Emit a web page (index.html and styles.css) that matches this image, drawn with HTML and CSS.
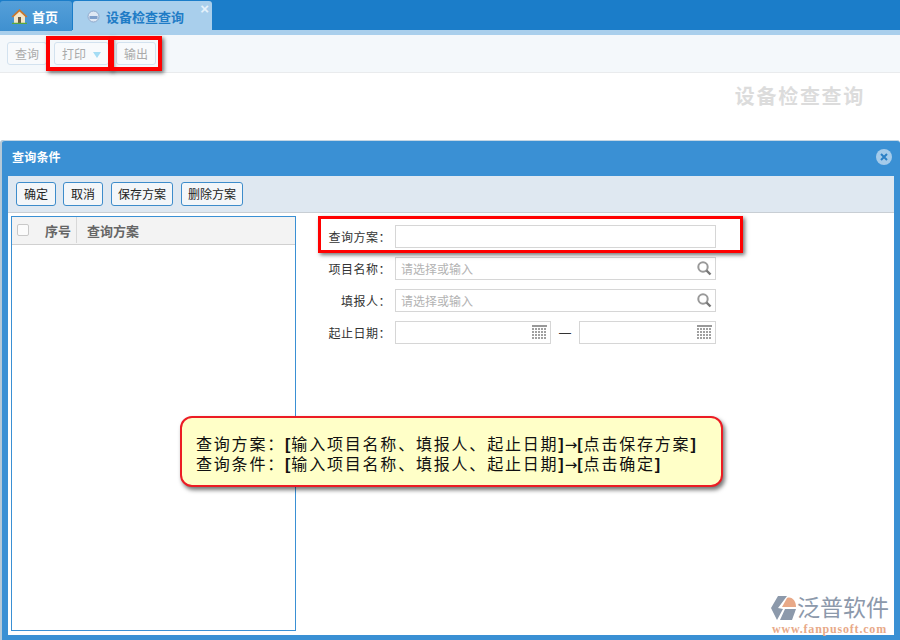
FILE: index.html
```html
<!DOCTYPE html>
<html lang="zh">
<head>
<meta charset="utf-8">
<title>设备检查查询</title>
<link rel="stylesheet" href="styles.css">
</head>
<body>
<div class="page">
  <header class="tabbar">
    <div class="tab tab-home">
      <svg class="home-icon" width="17" height="16" viewBox="0 0 17 16"><path d="M3 8v7h11V8L8.500 3z" fill="#f4e6c8"/><path d="M.5 8.500 8.500 1l8 7.500-1.500 1L8.500 3.500 2 9.500z" fill="#c9782f"/><rect x="7" y="9" width="3" height="6" fill="#6a5a44"/><path d="M1 15.500h15" stroke="#5aa83c" stroke-width="1.500"/></svg>
      <span>首页</span>
    </div>
    <div class="tab tab-active">
      <svg class="globe-icon" width="13" height="13" viewBox="0 0 13 13"><circle cx="6.500" cy="6.500" r="5.500" fill="#dfe8f4" stroke="#8fa9cc"/><rect x="2.500" y="6" width="8" height="3" fill="#7f9fcb"/></svg>
      <span class="tab-label">设备检查查询</span>
      <span class="tab-close">×</span>
    </div>
  </header>
  <nav class="toolbar">
    <button class="tool-btn">查询</button>
    <button class="tool-btn tool-print"><span>打印</span><i class="caret"></i></button>
    <button class="tool-btn">输出</button>
  </nav>
  <section class="title-area"><h1>设备检查查询</h1></section>
  <section class="dialog">
    <div class="dialog-head">
      <span>查询条件</span>
      <svg width="16" height="16" viewBox="0 0 16 16"><circle cx="8" cy="8" r="8" fill="#a5cbea"/><path d="M5 5l6 6M11 5l-6 6" stroke="#2c80c6" stroke-width="2"/></svg>
    </div>
    <div class="dialog-inner">
      <div class="actions">
        <button class="act-btn">确定</button>
        <button class="act-btn">取消</button>
        <button class="act-btn act-long">保存方案</button>
        <button class="act-btn act-long">删除方案</button>
      </div>
      <div class="content">
        <div class="plan-list">
          <div class="plan-head">
            <div class="col-check"><i class="checkbox"></i></div>
            <div class="col-no">序号</div>
            <div class="col-name">查询方案</div>
          </div>
        </div>
        <form class="form">
          <div class="row">
            <label>查询方案：</label>
            <div class="field field-wide"></div>
          </div>
          <div class="row">
            <label>项目名称：</label>
            <div class="field field-wide"><span class="ph">请选择或输入</span>
              <svg class="ico" width="15" height="15" viewBox="0 0 15 15"><circle cx="6" cy="6" r="4.700" fill="none" stroke="#999" stroke-width="2"/><path d="M9.500 9.500l4 4" stroke="#777" stroke-width="2.400"/></svg>
            </div>
          </div>
          <div class="row">
            <label>填报人：</label>
            <div class="field field-wide"><span class="ph">请选择或输入</span>
              <svg class="ico" width="15" height="15" viewBox="0 0 15 15"><circle cx="6" cy="6" r="4.700" fill="none" stroke="#999" stroke-width="2"/><path d="M9.500 9.500l4 4" stroke="#777" stroke-width="2.400"/></svg>
            </div>
          </div>
          <div class="row">
            <label>起止日期：</label>
            <div class="field field-date">
              <svg class="ico" width="15" height="14" viewBox="0 0 15 14"><rect width="15" height="2" fill="#999"/><path d="M0 4h15M0 7h15M0 10h15M0 13h15" stroke="#a0a0a0" stroke-width="2" stroke-dasharray="2 1"/></svg>
            </div>
            <span class="dash">—</span>
            <div class="field field-date field-date2">
              <svg class="ico" width="15" height="14" viewBox="0 0 15 14"><rect width="15" height="2" fill="#999"/><path d="M0 4h15M0 7h15M0 10h15M0 13h15" stroke="#a0a0a0" stroke-width="2" stroke-dasharray="2 1"/></svg>
            </div>
          </div>
        </form>
      </div>
    </div>
  </section>
  <div class="mark mark-print"></div>
  <div class="mark mark-export"></div>
  <div class="mark mark-plan"></div>
  <div class="callout">
    <p>查询方案：<b>[</b>输入项目名称、填报人、起止日期<b>]</b><em>→</em><b>[</b>点击保存方案<b>]</b></p>
    <p>查询条件：<b>[</b>输入项目名称、填报人、起止日期<b>]</b><em>→</em><b>[</b>点击确定<b>]</b></p>
  </div>
  <div class="logo">
    <div class="logo-top">
      <svg width="27" height="26" viewBox="0 0 27 26"><path d="M8 1h9L8 13l5 1-6 11L1 13z" fill="#8c99ab"/><path d="M12 12l5-9c5-2 9 3 9 9z" fill="#e8a988"/><path d="M15 14h11l-4 11H10z" fill="#8c99ab"/></svg>
      <span class="logo-name">泛普软件</span>
    </div>
    <div class="logo-url">www.fanpusoft.com</div>
  </div>
</div>
</body>
</html>
```

FILE: styles.css
```css
* { box-sizing: border-box; }
html, body { margin: 0; padding: 0; }
body { font-family: "Liberation Sans", "Noto Sans CJK SC", sans-serif; font-size: 12px; background: #fff; }
button { margin: 0; font-family: inherit; }
.page { position: relative; width: 900px; height: 640px; overflow: hidden; background: #fff; }

.tabbar { height: 35px; display: flex; align-items: flex-start; gap: 1px; padding-top: 1px; background: linear-gradient(#1b7dc9 0, #1b7dc9 30px, #a9cfec 30px); }
.tab { height: 30px; display: flex; align-items: center; font-weight: bold; font-size: 13px; border-radius: 3px 3px 0 0; }
.tab-home { width: 72px; padding-left: 11px; gap: 4px; color: #fff; background: linear-gradient(#559fd9, #3f90d0); }
.tab-active { position: relative; width: 139px; height: 34px; padding: 0 0 4px 14px; gap: 6px; color: #1f7cc6; background: #a9cfec; }
.tab-close { position: absolute; right: 3px; top: 0; color: #e6f2fb; font-size: 15px; line-height: 16px; }

.toolbar { height: 38px; display: flex; align-items: center; gap: 7px; padding: 0 0 0 7px; background: #f4f8fb; border-bottom: 1px solid #e9ebed; }
.tool-btn { display: flex; align-items: center; flex: none; height: 23px; padding: 0 7px; font-size: 12px; color: #aaa; white-space: nowrap; background: #f8fafc; border: 1px solid #d3e2ef; border-radius: 3px; }
.tool-print { width: 55px; }
.caret { flex: none; margin-left: 7px; margin-top: 2px; border: 4px solid transparent; border-top: 6px solid #a5dcf4; border-bottom: 0; }

.title-area { height: 67px; display: flex; justify-content: flex-end; padding: 12px 35px 0 0; }
.title-area h1 { margin: 0; font-size: 20px; line-height: 24px; font-weight: bold; letter-spacing: 1.700px; color: #dcdcdc; }

.dialog { height: 500px; margin-left: 2px; padding: 0 6px 5px 6px; background: #3a90d4; border-top: 1px solid #c4d6e4; border-radius: 3px 3px 0 0; box-shadow: -2px 0 0 #b5c9d8; display: flex; flex-direction: column; }
.dialog-head { height: 35px; flex: none; display: flex; align-items: center; justify-content: space-between; padding: 0 2px 4px 4px; color: #fff; font-weight: bold; font-size: 12px; letter-spacing: 0.200px; }
.dialog-inner { flex: 1; display: flex; flex-direction: column; background: #fff; }
.actions { height: 37px; flex: none; display: flex; align-items: center; gap: 7px; padding: 0 0 1px 8px; background: #dfe8f1; border-bottom: 1px solid #c8ced4; }
.act-btn { height: 24px; padding: 0 7px; font-size: 12px; color: #222; background: #f3f6f9; border: 1px solid #3d8ccb; border-radius: 3px; }
.act-long { width: 62px; padding: 0; margin-left: 1px; }

.content { flex: 1; display: flex; padding: 3px 0 4px 3px; }
.plan-list { width: 285px; border: 1px solid #3a90d4; }
.plan-head { height: 28px; display: flex; align-items: center; padding-bottom: 1px; background: #f3f3f3; border-bottom: 1px solid #d0d0d0; color: #666; font-weight: bold; font-size: 13px; }
.col-check { width: 24px; padding-left: 5px; display: flex; }
.checkbox { width: 12px; height: 12px; background: #fbfbfb; border: 1px solid #c8c8c8; border-radius: 2px; }
.col-no { display: flex; align-items: center; width: 41px; height: 100%; padding-left: 9px; border-right: 1px solid #d8d8d8; }
.col-name { padding-left: 10px; }

.form { margin-left: 24px; padding-top: 9px; display: flex; flex-direction: column; gap: 9px; }
.row { display: flex; align-items: center; height: 23px; }
.row label { width: 75px; padding-right: 4px; text-align: right; color: #333; font-size: 12px; letter-spacing: 0.500px; }
.field { position: relative; height: 23px; display: flex; align-items: center; background: #fff; border: 1px solid #d6d6d6; }
.field-wide { width: 321px; }
.field-date { width: 156px; }
.field-date2 { width: 137px; }
.ph { padding-left: 5px; color: #b3b3b3; font-size: 12px; }
.ico { position: absolute; right: 3px; top: 3px; }
.dash { width: 28px; text-align: center; color: #333; }

.mark { position: absolute; border: 4px solid #f00; box-shadow: 2px 2px 4px rgba(0,0,0,.55); }
.mark-print { left: 46px; top: 36px; width: 66px; height: 35px; }
.mark-export { left: 110px; top: 36px; width: 52px; height: 35px; }
.mark-plan { left: 318px; top: 216px; width: 425px; height: 37px; border-width: 3px; }

.callout { position: absolute; left: 180px; top: 416px; width: 543px; height: 71px; padding: 17px 0 0 14px; background: #ffffc8; border: 2px solid #ec1c24; border-radius: 12px; box-shadow: 2px 3px 4px rgba(0,0,0,.55); color: #111; font-size: 16px; line-height: 20px; }
.callout p { margin: 0; white-space: nowrap; letter-spacing: 1.800px; }
.callout b { font-weight: bold; letter-spacing: 1px; }
.callout em { font-family: "DejaVu Sans", sans-serif; font-style: normal; font-size: 15px; line-height: 16px; letter-spacing: 0; }

.logo { position: absolute; left: 770px; top: 595px; width: 122px; color: #8c99ab; }
.logo-top { display: flex; height: 26px; white-space: nowrap; }
.logo-name { font-size: 23px; line-height: 26px; }
.logo-url { margin: 1px 0 0 2px; font: bold 12px/14px "Liberation Serif", serif; color: #e8a988; letter-spacing: 0.800px; white-space: nowrap; }
```
